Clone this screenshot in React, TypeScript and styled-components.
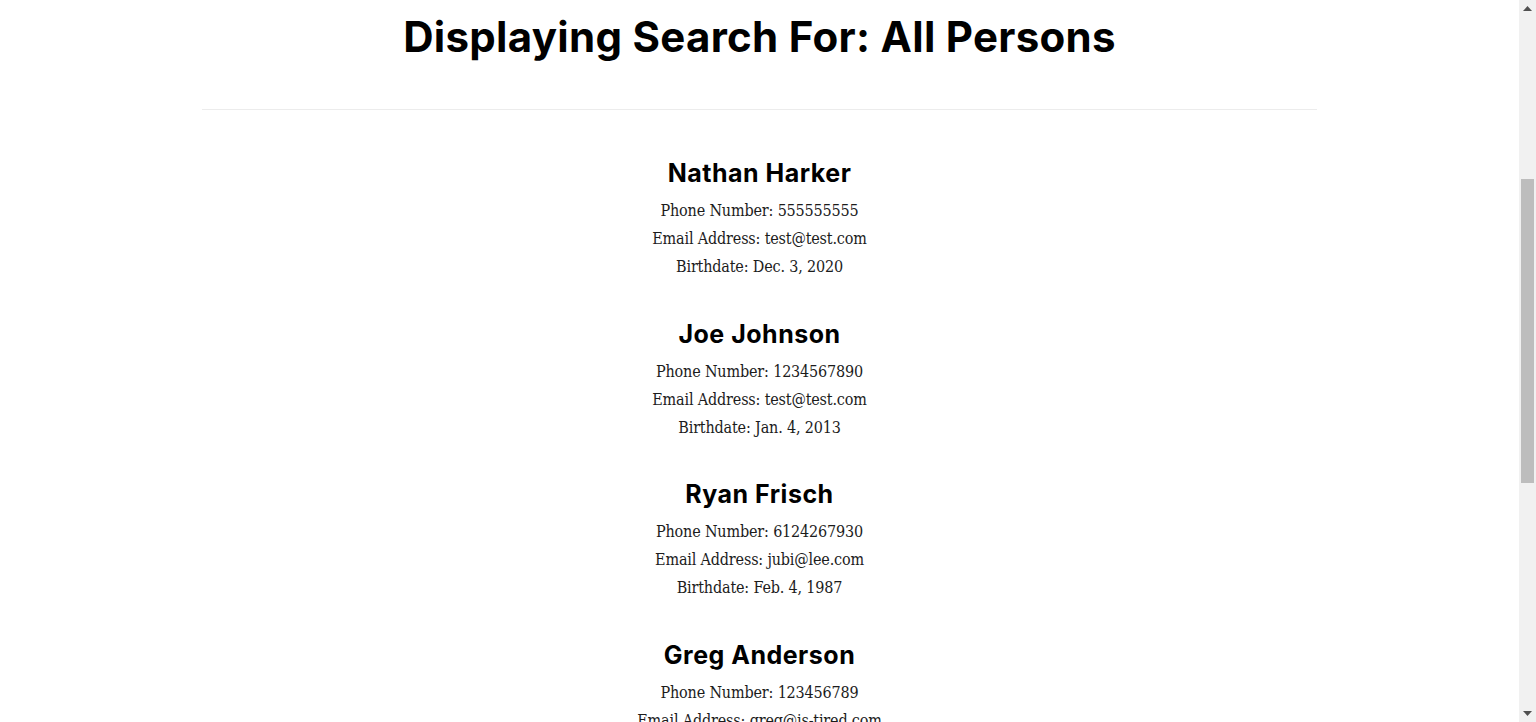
import React from "react";
import styled, { createGlobalStyle } from "styled-components";

const Global = createGlobalStyle`
  html, body { overflow: hidden; }
  body {
    margin: 0;
    background: #ffffff;
    color: #212121;
    font-family: "DejaVu Serif", "Liberation Serif", serif;
  }
`;

const Shell = styled.div`
  display: flex;
  width: 100vw;
  height: 100vh;
  overflow: hidden;
`;

const Viewport = styled.div`
  flex: 1;
  min-width: 0;
  height: 100%;
  overflow: hidden;
`;

const Page = styled.main`
  width: 1115px;
  margin: 0 auto;
  display: flex;
  flex-direction: column;
`;

const Title = styled.h1`
  margin: 13px 0 0;
  font-family: Inter, "Open Sans", sans-serif;
  font-weight: 700;
  font-size: 42px;
  letter-spacing: 0.3px;
  line-height: 48px;
  text-align: center;
  color: #000;
`;

const Rule = styled.hr`
  margin: 48px 0 0;
  border: 0;
  border-top: 1px solid #ececec;
  height: 0;
`;

const List = styled.section`
  display: flex;
  flex-direction: column;
  align-items: center;
  padding-top: 49px;
`;

const Person = styled.article`
  display: flex;
  flex-direction: column;
  align-items: center;
  padding-bottom: 38.67px;
`;

const Name = styled.h3`
  margin: 0 0 9px;
  font-family: Inter, "Open Sans", sans-serif;
  font-weight: 700;
  font-size: 25px;
  letter-spacing: 0.5px;
  line-height: 29px;
  color: #000;
`;

const Line = styled.p`
  margin: 0;
  font-size: 16px;
  font-stretch: condensed;
  letter-spacing: -0.17px;
  line-height: 28px;
  color: #1c1c1c;
  white-space: nowrap;
`;

const Scrollbar = styled.aside`
  width: 17px;
  height: 100%;
  flex: none;
  background: #f1f1f1;
  display: flex;
  flex-direction: column;
  align-items: center;
`;

const Arrow = styled.div`
  height: 17px;
  width: 17px;
  display: flex;
  align-items: center;
  justify-content: center;
  flex: none;
`;

const Track = styled.div`
  flex: 1;
  width: 100%;
  display: flex;
  flex-direction: column;
  align-items: center;
`;

const Thumb = styled.div`
  margin-top: 162px;
  width: 13px;
  height: 304px;
  background: #bdbdbd;
`;

const people = [
  { name: "Nathan Harker", phone: "555555555", email: "test@test.com", birth: "Dec. 3, 2020" },
  { name: "Joe Johnson", phone: "1234567890", email: "test@test.com", birth: "Jan. 4, 2013" },
  { name: "Ryan Frisch", phone: "6124267930", email: "jubi@lee.com", birth: "Feb. 4, 1987" },
  { name: "Greg Anderson", phone: "123456789", email: "greg@is-tired.com", birth: "Mar. 12, 1990" },
];

export default function App() {
  return (
    <>
      <Global />
      <Shell>
        <Viewport>
          <Page>
            <Title>Displaying Search For: All Persons</Title>
            <Rule />
            <List>
              {people.map((p) => (
                <Person key={p.name}>
                  <Name>{p.name}</Name>
                  <Line>Phone Number: {p.phone}</Line>
                  <Line>Email Address: {p.email}</Line>
                  <Line>Birthdate: {p.birth}</Line>
                </Person>
              ))}
            </List>
          </Page>
        </Viewport>
        <Scrollbar aria-hidden="true">
          <Arrow>
            <svg width="9" height="5" viewBox="0 0 9 5">
              <path d="M4.5 0 L9 5 L0 5 Z" fill="#505050" />
            </svg>
          </Arrow>
          <Track>
            <Thumb />
          </Track>
          <Arrow>
            <svg width="9" height="5" viewBox="0 0 9 5">
              <path d="M0 0 L9 0 L4.5 5 Z" fill="#505050" />
            </svg>
          </Arrow>
        </Scrollbar>
      </Shell>
    </>
  );
}
